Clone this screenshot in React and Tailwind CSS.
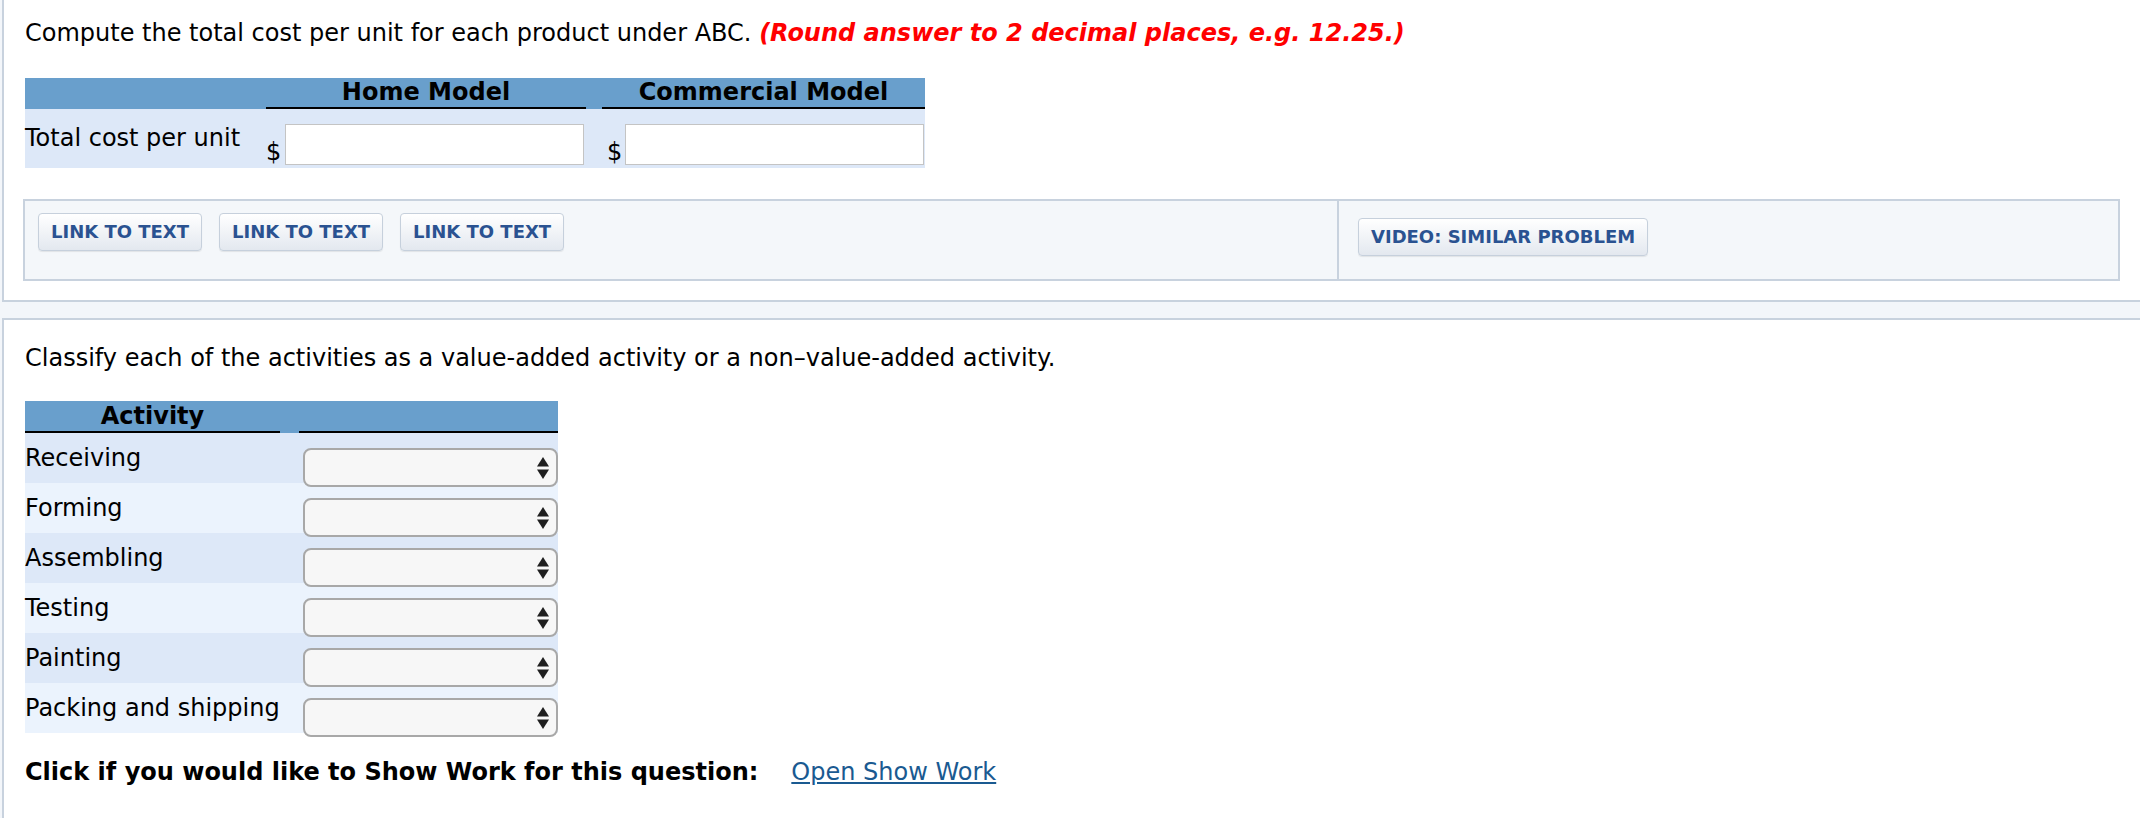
import React from "react";

const activities = ["Receiving", "Forming", "Assembling", "Testing", "Painting", "Packing and shipping"];

function LinkButton({ children }) {
    return (
        <button className="h-[38px] rounded-[4px] border border-[#c6d0dc] bg-linear-to-b from-white to-[#e3e8ef] px-[12px] text-[18px] font-bold leading-none text-[#2a5291] shadow-[0_1px_1px_rgba(0,0,0,0.08)]">
            {children}
        </button>
    );
}

function SelectBox() {
    return (
        <div className="ml-auto mt-[15px] flex h-[39px] w-[255px] items-center justify-end rounded-[8px] border-2 border-[#a8a8a8] bg-[#f7f7f7] pr-[6px]">
            <svg width="14" height="24" viewBox="0 0 14 24">
                <path d="M7 1 L13 10.5 H1 Z" fill="#1f1f1f" />
                <path d="M1 13.5 H13 L7 23 Z" fill="#1f1f1f" />
            </svg>
        </div>
    );
}

export default function App() {
    return (
        <div className="h-[818px] w-[2140px] overflow-hidden bg-[#f3f6fa] font-['DejaVu_Sans',Verdana,sans-serif] text-[24px] text-black">
            {/* first question panel */}
            <div className="-mt-[10px] ml-[2px] w-[2200px] border-2 border-[#c8d2de] bg-white pb-[19px] pl-[21px] pt-[27px]">
                <p className="leading-[29px]">
                    Compute the total cost per unit for each product under ABC.{" "}
                    <span className="font-bold italic text-[#ff0000]">(Round answer to 2 decimal places, e.g. 12.25.)</span>
                </p>

                <div className="mt-[30px] grid h-[31px] w-[900px] grid-cols-[241px_320px_16px_323px] bg-[#699fcc] font-bold">
                    <div />
                    <div className="flex items-center justify-center border-b-2 border-black leading-[29px]">Home Model</div>
                    <div />
                    <div className="flex items-center justify-center border-b-2 border-black leading-[29px]">Commercial Model</div>
                </div>
                <div className="grid h-[59px] w-[900px] grid-cols-[241px_320px_16px_323px] bg-[#dde8f8]">
                    <div className="pt-[15px] leading-[29px]">Total cost per unit</div>
                    <div className="flex items-end pb-[3px]">
                        <span className="leading-[26px]">$</span>
                        <input className="ml-[4px] h-[41px] w-[299px] border border-[#c4c4c4] bg-white" />
                    </div>
                    <div />
                    <div className="flex items-end pb-[3px] pl-[5px]">
                        <span className="leading-[26px]">$</span>
                        <input className="ml-[3px] h-[41px] w-[299px] border border-[#c4c4c4] bg-white" />
                    </div>
                </div>

                <div className="-ml-[2px] mt-[31px] flex h-[82px] w-[2097px] border-2 border-[#c8d2de] bg-[#f4f7fa]">
                    <div className="flex w-[1314px] items-start gap-[17px] border-r-2 border-[#c8d2de] pl-[13px] pt-[12px]">
                        <LinkButton>LINK TO TEXT</LinkButton>
                        <LinkButton>LINK TO TEXT</LinkButton>
                        <LinkButton>LINK TO TEXT</LinkButton>
                    </div>
                    <div className="flex-1 pl-[19px] pt-[16px]">
                        <LinkButton>VIDEO: SIMILAR PROBLEM</LinkButton>
                    </div>
                </div>
            </div>

            {/* second question panel */}
            <div className="ml-[2px] mt-[16px] h-[600px] w-[2200px] border-2 border-[#c8d2de] bg-white pl-[21px] pt-[24px]">
                <p className="leading-[29px]">
                    Classify each of the activities as a value-added activity or a non–value-added activity.
                </p>

                <div className="mt-[28px] grid h-[32px] w-[533px] grid-cols-[255px_19px_259px] bg-[#699fcc] font-bold">
                    <div className="flex items-center justify-center border-b-2 border-black leading-[29px]">Activity</div>
                    <div />
                    <div className="border-b-2 border-black" />
                </div>
                <div>
                    {activities.map((activity, i) => (
                        <div
                            key={activity}
                            className={`flex h-[50px] w-[533px] items-start ${i % 2 === 0 ? "bg-[#dde8f8]" : "bg-[#ebf3fd]"}`}
                        >
                            <span className="pt-[11px] leading-[29px]">{activity}</span>
                            <SelectBox />
                        </div>
                    ))}
                </div>

                <p className="mt-[25px] font-bold leading-[29px]">
                    Click if you would like to Show Work for this question:
                    <a className="ml-[33px] font-normal text-[#1a5a91] underline">Open Show Work</a>
                </p>
            </div>
        </div>
    );
}
